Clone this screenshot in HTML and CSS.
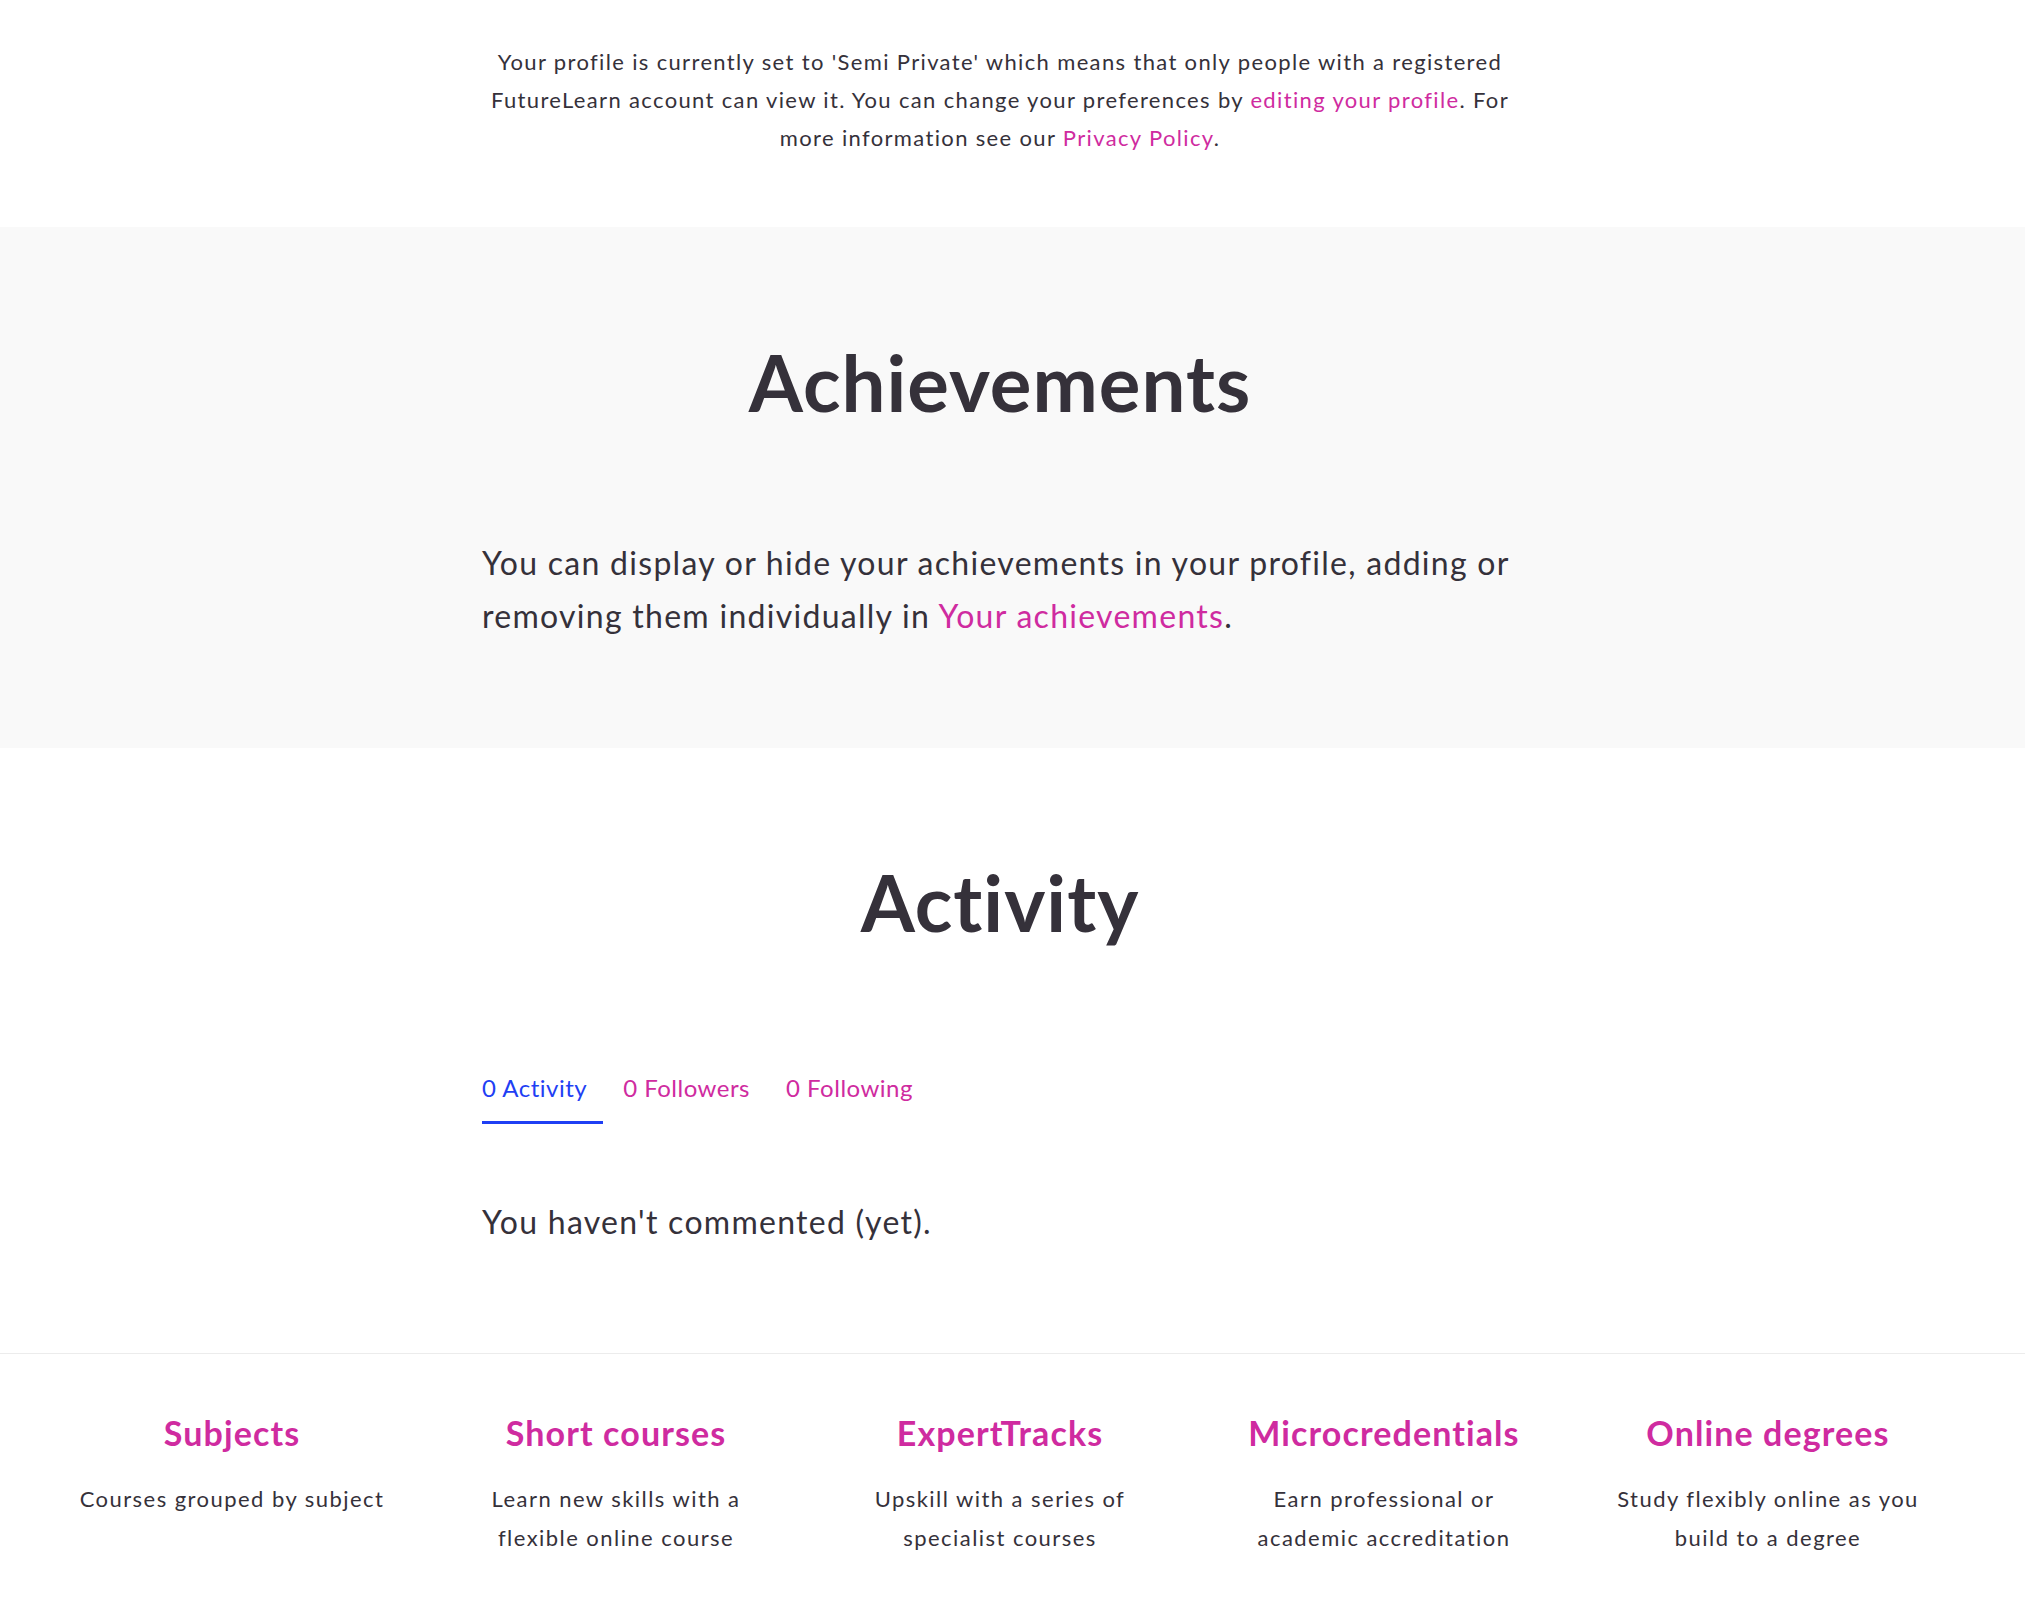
FILE: index.html
```html
<!DOCTYPE html>
<html lang="en">
<head>
    <meta charset="UTF-8">
    <meta name="viewport" content="width=device-width, initial-scale=1.0">
    <title>Profile</title>
    <link rel="stylesheet" href="styles.css">
</head>
<body>
    <!-- privacy notice -->
    <section class="band notice-band">
        <p class="notice">
            Your profile is currently set to 'Semi Private' which means that only people with a registered
            FutureLearn account can view it. You can change your preferences by <a href="#">editing your profile</a>. For
            more information see our <a href="#">Privacy Policy</a>.
        </p>
    </section>

    <section class="band grey">
        <div class="inner">
            <h2 class="section-title">Achievements</h2>
            <p class="lead">You can display or hide your achievements in your profile, adding or removing them individually in <a href="#">Your achievements</a>.</p>
        </div>
    </section>

    <section class="band activity">
        <div class="inner">
            <h2 class="section-title">Activity</h2>
            <nav class="tabs">
                <a href="#" class="tab active">0 Activity</a>
                <a href="#" class="tab">0 Followers</a>
                <a href="#" class="tab">0 Following</a>
            </nav>
            <p class="lead empty">You haven't commented (yet).</p>
        </div>
    </section>

    <footer class="band footer">
        <div class="footer-grid">
            <div class="footer-item">
                <a href="#" class="footer-title">Subjects</a>
                <p>Courses grouped by subject</p>
            </div>
            <div class="footer-item">
                <a href="#" class="footer-title">Short courses</a>
                <p>Learn new skills with a flexible online course</p>
            </div>
            <div class="footer-item">
                <a href="#" class="footer-title">ExpertTracks</a>
                <p>Upskill with a series of specialist courses</p>
            </div>
            <div class="footer-item">
                <a href="#" class="footer-title">Microcredentials</a>
                <p>Earn professional or academic accreditation</p>
            </div>
            <div class="footer-item">
                <a href="#" class="footer-title">Online degrees</a>
                <p>Study flexibly online as you build to a degree</p>
            </div>
        </div>
    </footer>
</body>
</html>
```

FILE: styles.css
```css
body {
    margin: 0;
    font-family: Lato, "Open Sans", sans-serif;
    font-variant-ligatures: none;
    color: #35313a;
    background: #fff;
}

a {
    color: #cf2ba0;
    text-decoration: none;
}

/* content is centred slightly left of the window */
.band {
    padding-right: 25px;
}

.inner {
    width: 1036px;
    margin: 0 auto;
}

.notice-band {
    padding-top: 43px;
    padding-bottom: 70px;
}

.notice {
    width: 1044px;
    margin: 0 auto;
    text-align: center;
    font-size: 22px;
    line-height: 38px;
    letter-spacing: 1.35px;
}

.grey {
    background-color: #f9f9f9;
    padding-top: 107px;
    padding-bottom: 106px;
}

.section-title {
    margin: 0;
    text-align: center;
    font-size: 78px;
    line-height: 96px;
    font-weight: 700;
    letter-spacing: 1px;
}

.lead {
    margin: 106px 0 0;
    font-size: 32px;
    line-height: 53px;
    letter-spacing: 1.28px;
}

.activity {
    padding-top: 106px;
    padding-bottom: 105px;
}

.tabs {
    display: flex;
    gap: 20px;
    margin-top: 120px;
}

.tab {
    font-size: 24px;
    line-height: 36px;
    letter-spacing: 0.5px;
    padding-right: 16px;
    padding-bottom: 15px;
    border-bottom: 3px solid transparent;
}

.tab.active {
    color: #1f3ff4;
    border-bottom-color: #1f3ff4;
}

.lead.empty {
    margin-top: 71px;
}

.footer {
    border-top: 1px solid #ececec;
    padding-top: 59px;
    padding-bottom: 60px;
}

.footer-grid {
    display: grid;
    grid-template-columns: repeat(5, 384px);
    justify-content: center;
}

.footer-item {
    text-align: center;
    padding: 0 35px;
}

.footer-title {
    display: block;
    font-size: 34px;
    line-height: 40px;
    font-weight: 700;
    letter-spacing: 1.1px;
}

.footer-item p {
    margin: 26px 0 0;
    font-size: 22px;
    line-height: 39px;
    letter-spacing: 1.45px;
}
```
